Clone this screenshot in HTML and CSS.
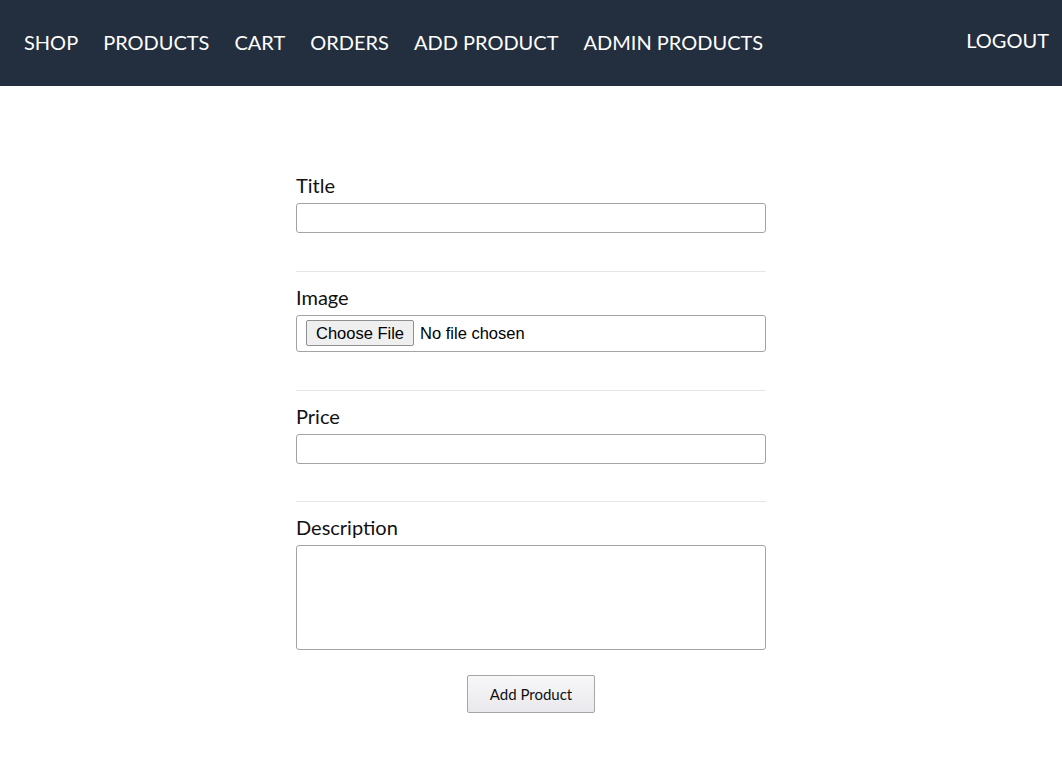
FILE: index.html
```html
<!DOCTYPE html>
<html lang="en">
<head>
<meta charset="utf-8">
<title>Add Product</title>
<link rel="stylesheet" href="styles.css">
</head>
<body>
<header class="main-header">
  <nav class="main-header__nav">
    <ul class="main-header__item-list">
      <li class="main-header__item"><a href="#">Shop</a></li>
      <li class="main-header__item"><a href="#">Products</a></li>
      <li class="main-header__item"><a href="#">Cart</a></li>
      <li class="main-header__item"><a href="#">Orders</a></li>
      <li class="main-header__item"><a href="#">Add Product</a></li>
      <li class="main-header__item"><a href="#">Admin Products</a></li>
    </ul>
    <form class="logout-form">
      <button type="button" class="logout-btn">Logout</button>
    </form>
  </nav>
</header>
<main class="main">
  <form class="product-form">
    <div class="form-control">
      <label for="title">Title</label>
      <input class="text-input" type="text" id="title" name="title">
    </div>
    <div class="form-control">
      <label for="image">Image</label>
      <input class="file-input" type="file" id="image" name="image">
    </div>
    <div class="form-control form-control--tight">
      <label for="price">Price</label>
      <input class="text-input" type="text" id="price" name="price">
    </div>
    <div class="form-control form-control--last">
      <label for="description">Description</label>
      <textarea class="text-area" id="description" name="description"></textarea>
    </div>
    <div class="actions">
      <button class="btn" type="button">Add Product</button>
    </div>
  </form>
</main>
</body>
</html>
```

FILE: styles.css
```css
* {
  box-sizing: border-box;
}

body {
  margin: 0;
  font-family: Lato, "Open Sans", sans-serif;
  color: #111;
  background: #fff;
}

.main-header {
  height: 86px;
  background: #232f3e;
  padding: 0 13px 0 24px;
}

.main-header__nav {
  height: 100%;
  display: flex;
  align-items: center;
  justify-content: space-between;
}

.main-header__item-list {
  list-style: none;
  margin: 0 0 2px 0;
  padding: 0;
  display: flex;
  gap: 25px;
}

.main-header__item a {
  color: #fff;
  text-decoration: none;
  text-transform: uppercase;
  font-size: 20px;
  line-height: 24px;
}

.logout-form {
  margin: 0 0 6px 0;
}

.logout-btn {
  font-family: Lato, "Open Sans", sans-serif;
  font-size: 20px;
  line-height: 24px;
  text-transform: uppercase;
  color: #fff;
  background: transparent;
  border: none;
  padding: 0;
  cursor: pointer;
}

.main {
  padding-top: 88px;
}

.product-form {
  width: 470px;
  margin: 0 auto;
}

.form-control {
  padding-bottom: 38px;
  border-bottom: 1px solid #e5e5e5;
  margin-bottom: 14px;
}

.form-control--tight {
  padding-bottom: 37px;
}

.form-control--last {
  padding-bottom: 0;
  border-bottom: none;
  margin-bottom: 25px;
}

.form-control label {
  display: block;
  font-size: 20px;
  line-height: 22px;
  margin-bottom: 7px;
  color: #111;
}

.text-input,
.text-area,
.file-input {
  display: block;
  width: 100%;
  border: 1px solid #a3a3a3;
  border-radius: 3px;
  background: #fff;
  font-family: Lato, sans-serif;
  font-size: 16px;
}

.text-input {
  height: 30px;
  padding: 2px 6px;
}

.text-area {
  height: 105px;
  padding: 4px 6px;
  resize: none;
  margin: 0;
}

.file-input {
  padding: 4px 9px 5px;
  font-family: "Liberation Sans", Arial, sans-serif;
  font-size: 16.5px;
  color: #000;
  line-height: 18px;
}

.file-input::file-selector-button {
  font-family: "Liberation Sans", Arial, sans-serif;
  font-size: 16.5px;
  line-height: 18px;
  padding: 3px 9px;
  margin-right: 6px;
  border: 1px solid #8f8f8f;
  border-radius: 2px;
  background: #efefef;
  color: #000;
}

.actions {
  text-align: center;
}

.btn {
  width: 128px;
  height: 38px;
  font-family: Lato, sans-serif;
  font-size: 15px;
  color: #111;
  background: linear-gradient(#f7f7f8, #e9e9ed);
  border: 1px solid #a6a6a6;
  border-radius: 2px;
  cursor: pointer;
}
```
